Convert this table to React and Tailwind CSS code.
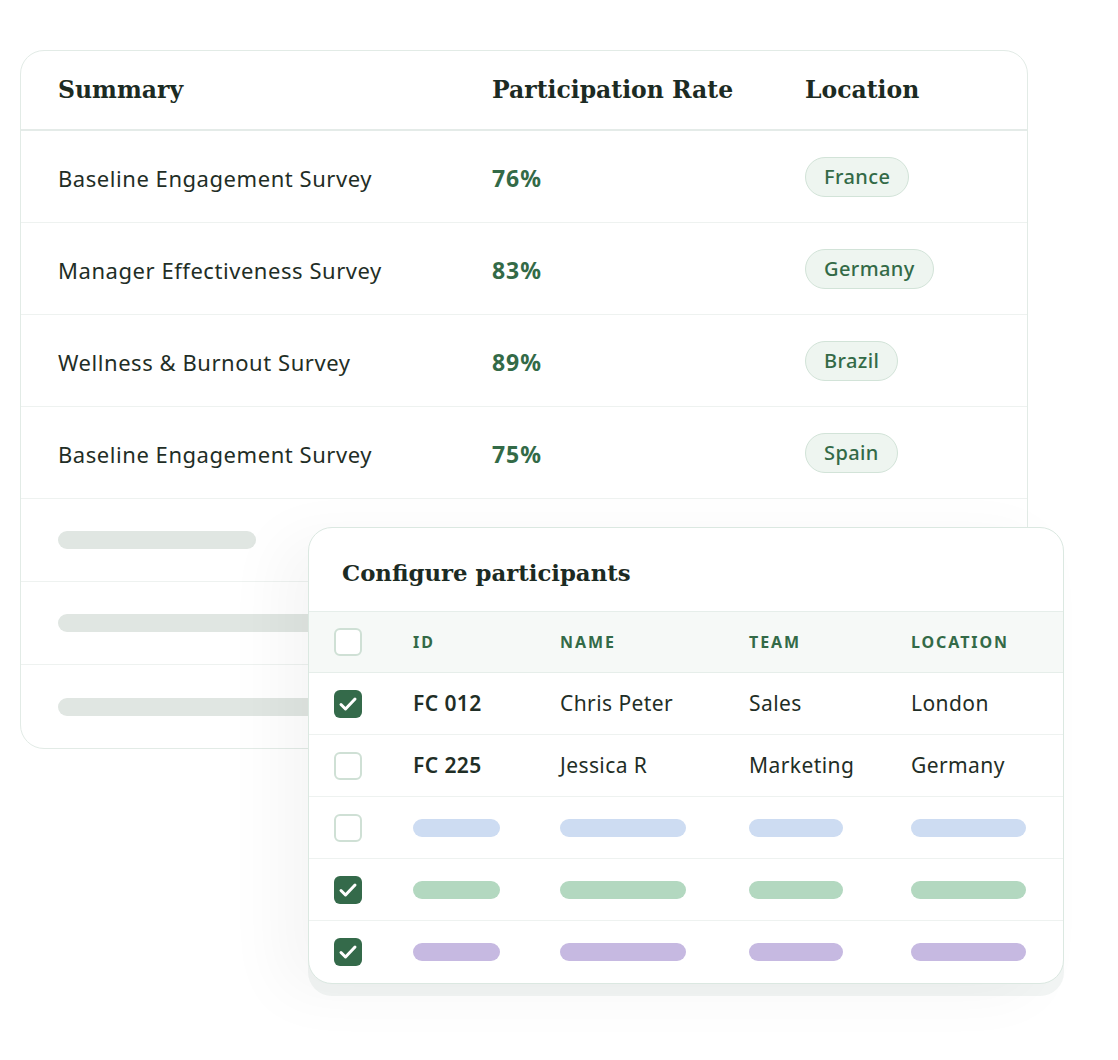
const surveys = [
  { name: "Baseline Engagement Survey", rate: "76%", location: "France" },
  { name: "Manager Effectiveness Survey", rate: "83%", location: "Germany" },
  { name: "Wellness & Burnout Survey", rate: "89%", location: "Brazil" },
  { name: "Baseline Engagement Survey", rate: "75%", location: "Spain" },
];

const participants = [
  { checked: true, id: "FC 012", name: "Chris Peter", team: "Sales", location: "London" },
  { checked: false, id: "FC 225", name: "Jessica R", team: "Marketing", location: "Germany" },
  { checked: false, bar: "bg-[#cddcf2]" },
  { checked: true, bar: "bg-[#b3d8c0]" },
  { checked: true, bar: "bg-[#c6b9e1]" },
];

const serif = "font-['DejaVu_Serif',serif] font-bold";
const sans = "font-['Noto_Sans',sans-serif]";

const Checkbox = ({ checked }) =>
  checked ? (
    <div className="w-[28px] h-[28px] rounded-[6px] bg-[#346a4a] flex items-center justify-center">
      <svg width="24" height="24" viewBox="0 0 24 24" fill="none" stroke="white" strokeWidth="3" strokeLinecap="round" strokeLinejoin="round">
        <path d="M5 12.5l4.5 4.5L19 7" />
      </svg>
    </div>
  ) : (
    <div className="w-[28px] h-[28px] rounded-[6px] border-2 border-[#cfe0d5] bg-white" />
  );

export default function App() {
  return (
    <div className={`relative w-[1118px] h-[1060px] bg-white pt-[50px] pl-[20px] ${sans} text-[#1f2e26]`}>
      {/* Survey summary table */}
      <div className="w-[1008px] rounded-[24px] border border-[#e2ebe6] bg-white overflow-hidden">
        <div className="grid grid-cols-[434px_313px_1fr] pl-[37px] h-[80px] items-center border-b-2 border-[#e4ebe8]">
          <div className={`${serif} text-[23.5px] text-[#1c2b23] pt-[2px]`}>Summary</div>
          <div className={`${serif} text-[23.5px] text-[#1c2b23] pt-[2px]`}>Participation Rate</div>
          <div className={`${serif} text-[23.5px] text-[#1c2b23] pt-[2px]`}>Location</div>
        </div>
        {surveys.map((s, i) => (
          <div key={i} className="grid grid-cols-[434px_313px_1fr] pl-[37px] h-[92px] items-center border-b border-[#eef2f0]">
            <div className="text-[22px] tracking-[0.025em] pt-[3px]">{s.name}</div>
            <div className="text-[23px] font-bold tracking-[0.04em] text-[#336a47] pt-[3px]">{s.rate}</div>
            <div>
              <span className="inline-flex items-center h-[40px] px-[18px] rounded-full border border-[#d2e3d8] bg-[#eef5f0] text-[20px] tracking-[0.02em] font-medium text-[#336a47]">
                {s.location}
              </span>
            </div>
          </div>
        ))}
        {[0, 1, 2].map((i) => (
          <div key={i} className={`h-[83px] pl-[37px] flex items-center ${i < 2 ? "border-b border-[#eef2f0]" : ""}`}>
            <div className={`h-[18px] rounded-full bg-[#e0e6e2] ${i === 0 ? "w-[198px]" : "w-[360px]"}`} />
          </div>
        ))}
      </div>

      {/* Configure participants panel */}
      <div className="absolute left-[308px] top-[527px] w-[756px] rounded-[24px] border border-[#dbe8e1] bg-white overflow-hidden shadow-[0_12px_0_rgba(40,90,65,0.06),-30px_10px_60px_rgba(0,0,0,0.04)]">
        <div className="h-[83px] pl-[33px] flex items-center pt-[8px]">
          <div className={`${serif} text-[22.8px] text-[#1c2b23]`}>Configure participants</div>
        </div>
        <div className="grid grid-cols-[79px_147px_189px_162px_1fr] pl-[25px] h-[62px] items-center bg-[#f6f9f7] border-y border-[#e6eeea] text-[16px] font-bold tracking-[0.12em] text-[#336a47]">
          <Checkbox checked={false} />
          <div>ID</div>
          <div>NAME</div>
          <div>TEAM</div>
          <div>LOCATION</div>
        </div>
        {participants.map((p, i) => (
          <div
            key={i}
            className={`grid grid-cols-[79px_147px_189px_162px_1fr] pl-[25px] h-[62px] items-center text-[21px] tracking-[0.02em] ${i < participants.length - 1 ? "border-b border-[#eef2f0]" : ""}`}
          >
            <Checkbox checked={p.checked} />
            {p.bar ? (
              <>
                <div className={`h-[18px] w-[87px] rounded-full ${p.bar}`} />
                <div className={`h-[18px] w-[126px] rounded-full ${p.bar}`} />
                <div className={`h-[18px] w-[94px] rounded-full ${p.bar}`} />
                <div className={`h-[18px] w-[115px] rounded-full ${p.bar}`} />
              </>
            ) : (
              <>
                <div className="font-semibold">{p.id}</div>
                <div>{p.name}</div>
                <div>{p.team}</div>
                <div>{p.location}</div>
              </>
            )}
          </div>
        ))}
      </div>
    </div>
  );
}
